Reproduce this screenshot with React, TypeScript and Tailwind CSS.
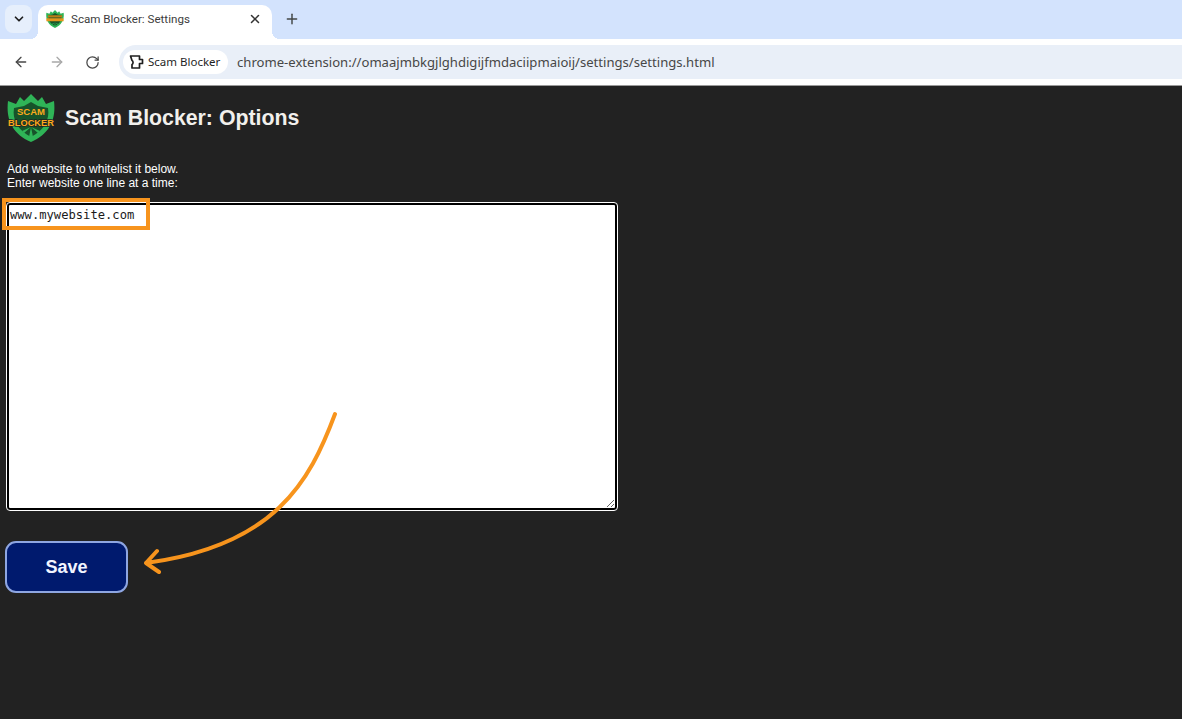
import { ArrowLeft, ArrowRight, ChevronDown, Plus, RotateCw, X } from "lucide-react";

const Logo = ({ size, label = true }: { size: number; label?: boolean }) => (
  <svg width={size} height={size} viewBox="0 0 48 48" className="shrink-0">
    <path
      d="M1 7 L9 10 L13 3 L17 7 L24 0 L31 7 L35 3 L39 10 L47 7 C49 24 44 39 24 48 C4 39 -1 24 1 7 Z"
      fill="#2fb457"
    />
    <path d="M7 14 L17 12 L24 8 L31 12 L41 14 C43 26 37 36 24 43 C11 36 5 26 7 14 Z" fill="#17532a" />
    <path d="M24 33 L22 43 L26 43 Z M24 33 L15 37 L17 39 Z M24 33 L33 37 L31 39 Z" fill="#2fb457" />
    {label ? (
      <>
        <text
          x="24"
          y="21"
          textAnchor="middle"
          fontFamily="'Liberation Sans', sans-serif"
          fontWeight="700"
          fontSize="9.5"
          fill="#fcaa1c"
        >
          SCAM
        </text>
        <text
          x="24"
          y="32"
          textAnchor="middle"
          fontFamily="'Liberation Sans', sans-serif"
          fontWeight="700"
          fontSize="9.3"
          fill="#fcaa1c"
          stroke="#222222"
          strokeWidth="1.5"
          paintOrder="stroke"
        >
          BLOCKER
        </text>
      </>
    ) : (
      <>
        <rect x="5" y="14" width="38" height="6" fill="#b97f16" />
        <rect x="1" y="22" width="46" height="8" fill="#e3961c" />
      </>
    )}
  </svg>
);

const ExtensionIcon = () => (
  <svg width="16" height="16" viewBox="0 0 16 16" fill="none" stroke="#1f1f1f" strokeWidth="1.7" strokeLinejoin="round">
    <path d="M2.5 2 H11.5 V5.5 H14.5 V9.5 H11.5 V14 H4 V10.5 C5.4 10 5.4 7 4 6.5 Z" />
  </svg>
);

const TabStrip = () => (
  <div className="flex h-[39px] bg-[#d3e3fd] pl-[5px] pt-[5px]">
    <button className="flex h-[28px] w-[27px] items-center justify-center rounded-lg bg-[#e6effc]">
      <ChevronDown size={14} strokeWidth={3} color="#1f1f1f" />
    </button>
    <div className="relative ml-[6px] flex h-[34px] w-[234px] items-center rounded-t-[10px] bg-white pb-[6px] pl-[8px] pr-[10px] before:absolute before:bottom-0 before:left-[-8px] before:h-[8px] before:w-[8px] before:bg-[radial-gradient(circle_at_0_0,transparent_8px,white_8px)] after:absolute after:bottom-0 after:right-[-8px] after:h-[8px] after:w-[8px] after:bg-[radial-gradient(circle_at_100%_0,transparent_8px,white_8px)]">
      <Logo size={18} label={false} />
      <span className="ml-[7px] flex-1 pt-[1px] text-[11.6px] text-[#3c3c3c] [font-family:Roboto,sans-serif]">
        Scam Blocker: Settings
      </span>
      <X size={14} strokeWidth={2.6} color="#333333" />
    </div>
    <div className="ml-[11px] flex h-[28px] w-[18px] items-center justify-center">
      <Plus size={16} strokeWidth={2.2} color="#444746" />
    </div>
  </div>
);

const Toolbar = () => (
  <div className="flex h-[47px] items-start border-b border-[#9a9a9a] bg-white pl-[13px] pt-[6px]">
    <div className="flex h-[34px] items-center">
      <ArrowLeft size={16} strokeWidth={2} color="#474747" />
      <ArrowRight size={16} strokeWidth={2} color="#a8a8a8" className="ml-[20px]" />
      <RotateCw size={15} strokeWidth={2} color="#474747" className="ml-[20px]" />
    </div>
    <div className="ml-[19px] flex h-[34px] flex-1 items-center rounded-l-[17px] bg-[#e9eff8] pl-[4px]">
      <div className="flex h-[24px] w-[105px] items-center gap-[3px] rounded-full bg-white pl-[5px]">
        <ExtensionIcon />
        <span className="ml-[1px] text-[11.5px] text-[#1f1f1f] [font-family:'Noto_Sans',sans-serif]">Scam Blocker</span>
      </div>
      <span className="ml-[9px] pt-[1px] text-[13.1px] text-[#474747] [font-family:'Noto_Sans',sans-serif]">
        chrome-extension://omaajmbkgjlghdigijfmdaciipmaioij/settings/settings.html
      </span>
    </div>
  </div>
);

const Annotations = () => (
  <>
    <div className="pointer-events-none absolute left-[2px] top-[112px] h-[32px] w-[148px] border-[4px] border-[#f7941d]" />
    <svg className="pointer-events-none absolute left-[130px] top-[320px]" width="220" height="170" viewBox="0 0 220 170" fill="none">
      <path
        d="M205 8 C180 75 145 140 16 157 M27 145 L16 157 L29 166"
        stroke="#f7941d"
        strokeWidth="4"
        strokeLinecap="round"
        strokeLinejoin="round"
      />
    </svg>
  </>
);

export default function App() {
  return (
    <div className="flex h-[719px] flex-col overflow-hidden bg-[#222222] [font-family:'Liberation_Sans',Arial,sans-serif]">
      <TabStrip />
      <Toolbar />
      <main className="relative flex-1 pl-[7px] pt-[8px]">
        <header className="flex items-center gap-[10px]">
          <Logo size={48} />
          <h1 className="pt-[2px] text-[21.3px] font-bold text-[#f2f0ec]">Scam Blocker: Options</h1>
        </header>
        <p className="mt-[20px] text-[12px] leading-[14px] text-white">
          Add website to whitelist it below.
          <br />
          Enter website one line at a time:
        </p>
        <textarea
          defaultValue="www.mywebsite.com"
          className="mt-[13px] block h-[307px] w-[610px] rounded-[3px] border-2 border-black bg-white pl-[1px] pt-[3px] text-[12.15px] leading-[14px] text-[#1a1a1a] outline outline-1 outline-white [font-family:'DejaVu_Sans_Mono',monospace]"
        />
        <button className="-ml-[2px] mt-[31px] block h-[52px] w-[123px] rounded-[11px] border-2 border-[#8ea6e2] bg-[#001a6e] text-[18px] font-bold text-[#f2f5ff]">
          Save
        </button>
        <Annotations />
      </main>
    </div>
  );
}
